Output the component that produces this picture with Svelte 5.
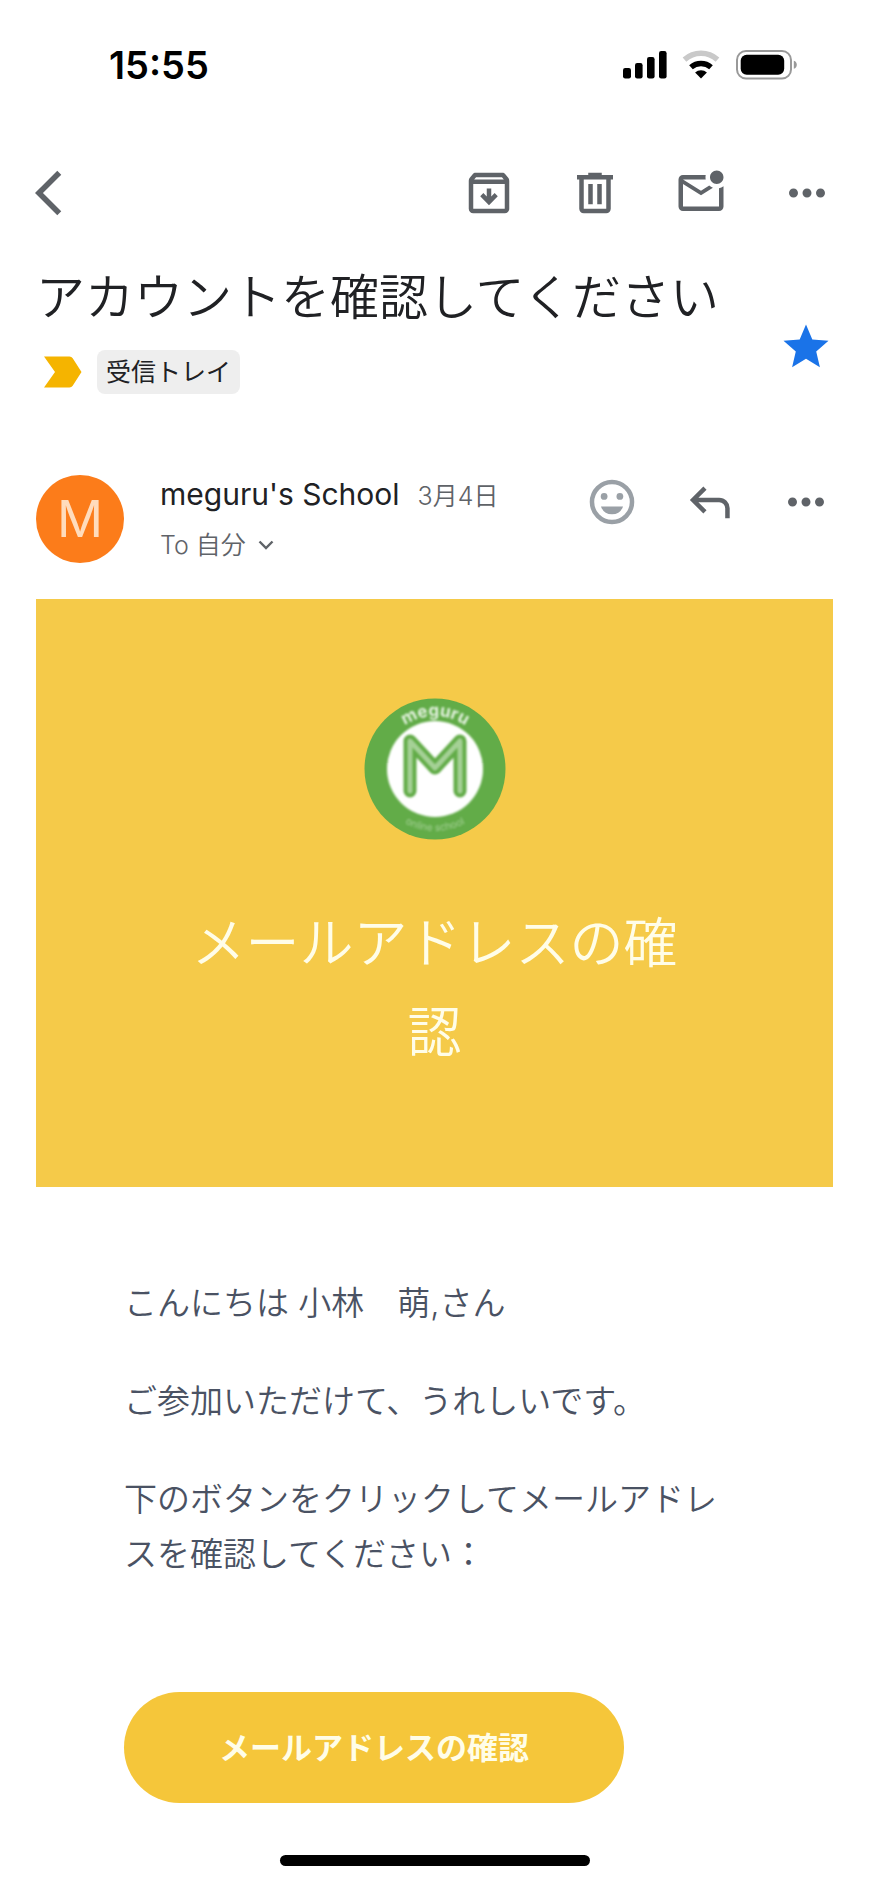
<script lang="ts">
	const archive =
		'M20.54 5.23l-1.39-1.68C18.88 3.21 18.47 3 18 3H6c-.47 0-.88.21-1.16.55L3.46 5.23C3.17 5.57 3 6.02 3 6.5V19c0 1.1.9 2 2 2h14c1.1 0 2-.9 2-2V6.5c0-.48-.17-.93-.46-1.27zM6.24 5h11.52l.83 1H5.42l.82-1zM5 19V8h14v11H5zM13 10h-2v3.5l-1.5-1.5-1.4 1.4 3.9 4 3.9-4-1.4-1.4-1.5 1.5z';
	const trash =
		'M15 4V3H9v1H4v2h1v13c0 1.1.9 2 2 2h10c1.1 0 2-.9 2-2V6h1V4h-5zm2 15H7V6h10v13zM9 8h2v9H9zM13 8h2v9h-2z';
	const unread =
		'M22 8.98V18c0 1.1-.9 2-2 2H4c-1.1 0-2-.9-2-2V6c0-1.1.9-2 2-2h10.1c-.06.32-.1.66-.1 1s.04.68.1 1H4l8 5 3.67-2.29c.47.43 1.02.76 1.63.98L12 13 4 8v10h16V9.9c.74-.15 1.42-.48 2-.92zM16 5c0 1.66 1.34 3 3 3s3-1.34 3-3-1.34-3-3-3-3 1.34-3 3z';
	const more =
		'M6 10c-1.1 0-2 .9-2 2s.9 2 2 2 2-.9 2-2-.9-2-2-2zm12 0c-1.1 0-2 .9-2 2s.9 2 2 2 2-.9 2-2-.9-2-2-2zm-6 0c-1.1 0-2 .9-2 2s.9 2 2 2 2-.9 2-2-.9-2-2-2z';

	const tools = [
		{ label: 'アーカイブ', path: archive },
		{ label: '削除', path: trash },
		{ label: '未読にする', path: unread },
		{ label: 'その他', path: more }
	];

	let starred = $state(true);
</script>

<div class="screen">
	<div class="status">
		<span class="time">15:55</span>
		<svg width="175" height="30" viewBox="0 0 175 30" aria-hidden="true">
			<rect x="0" y="18" width="8" height="10.5" rx="2.2" />
			<rect x="12" y="13" width="7.6" height="15.5" rx="2.2" />
			<rect x="24" y="7" width="7.6" height="21.5" rx="2.2" />
			<rect x="36" y="1" width="7.6" height="27.5" rx="2.2" />
			<g fill="none" stroke-width="5.5">
				<path d="M61.5 9.6a24.7 24.7 0 0 1 33 0" stroke="#c9c9c9" />
				<path d="M68 17.2a15.2 15.2 0 0 1 20 0" stroke="#000" />
			</g>
			<path d="M78 28.5l-5.9-6a8.6 8.6 0 0 1 11.8 0z" />
			<rect x="114" y="1" width="54" height="27.5" rx="9" fill="none" stroke="#999" stroke-width="2" />
			<rect x="117.7" y="4.7" width="43.5" height="20" rx="6" />
			<path d="M170.8 10.8c4 1 4 7 0 8z" fill="#999" />
		</svg>
	</div>

	<nav class="toolbar">
		<button class="icon back" aria-label="戻る">
			<svg viewBox="0 0 24 24"><path d="M11.67 3.87L9.9 2.1 0 12l9.9 9.9 1.77-1.77L3.54 12z" /></svg>
		</button>
		{#each tools as tool}
			<button class="icon" aria-label={tool.label}>
				<svg viewBox="0 0 24 24"><path fill-rule="evenodd" d={tool.path} /></svg>
			</button>
		{/each}
	</nav>

	<main>
		<header class="subject">
			<div>
				<h1>アカウントを確認してください</h1>
				<div class="labels">
					<svg width="38" height="32" viewBox="0 0 38 32" aria-hidden="true">
						<path d="M0 .5h25.5q2 0 3.2 1.8L37.5 16l-8.8 13.7q-1.2 1.8-3.2 1.8H0L11 16z" fill="#f5b400" />
					</svg>
					<span class="chip">受信トレイ</span>
				</div>
			</div>
			<button
				class="icon star"
				class:starred
				aria-label="スター"
				aria-pressed={starred}
				onclick={() => (starred = !starred)}
			>
				<svg viewBox="0 0 24 24">
					<path d="M12 17.27L18.18 21l-1.64-7.03L22 9.24l-7.19-.61L12 2 9.19 8.63 2 9.24l5.46 4.73L5.82 21z" />
				</svg>
			</button>
		</header>

		<section class="sender">
			<div class="avatar">M</div>
			<div class="who">
				<div class="line">
					<span class="name">meguru's School</span>
					<span class="small">3月4日</span>
				</div>
				<button class="to small">
					To 自分
					<svg width="16" height="10" viewBox="0 0 16 10" aria-hidden="true">
						<path d="M1.5 1.5L8 8l6.5-6.5" fill="none" stroke="currentColor" stroke-width="2.4" />
					</svg>
				</button>
			</div>
			<div class="actions">
				<button class="icon emoji" aria-label="リアクション">
					<svg viewBox="0 0 24 24">
						<circle cx="12" cy="12" r="8.9" fill="none" stroke="currentColor" stroke-width="2" />
						<circle cx="8.5" cy="9.5" r="1.5" />
						<circle cx="15.5" cy="9.5" r="1.5" />
						<path d="M7.1 14h9.8a5.2 5.2 0 0 1-9.8 0z" />
					</svg>
				</button>
				<button class="icon" aria-label="返信">
					<svg viewBox="0 0 24 24">
						<path
							d="M10.2 5.8l-5.3 5.3 5.3 5.3M4.9 11.1h11.6a3.7 3.7 0 0 1 3.7 3.7v4.4"
							fill="none"
							stroke="currentColor"
							stroke-width="2"
						/>
					</svg>
				</button>
				<button class="icon" aria-label="その他">
					<svg viewBox="0 0 24 24"><path d={more} /></svg>
				</button>
			</div>
		</section>

		<article>
			<div class="banner">
				<svg class="logo" viewBox="-71 -71 142 142" role="img" aria-label="meguru">
					<defs>
						<path id="arc-top" d="M-53 0a53 53 0 0 1 106 0" />
						<path id="arc-bottom" d="M-62 0a62 62 0 0 0 124 0" />
					</defs>
					<circle r="70.5" fill="#62ac48" />
					<g class="soft">
						<circle r="48" fill="#fff" />
						<g fill="none" stroke-linecap="round" stroke-linejoin="round">
							<path d="M-25 22V-28L0-1 25-28V22" stroke="#62ac48" stroke-width="13" />
							<path d="M-25 22V-28L0-1 25-28V22" stroke="#a5d196" stroke-width="5" />
						</g>
						<text class="logo-name"><textPath href="#arc-top" startOffset="50%">meguru</textPath></text>
						<text class="logo-sub"><textPath href="#arc-bottom" startOffset="50%">online school</textPath></text>
					</g>
				</svg>
				<h2>メールアドレスの確認</h2>
			</div>

			<div class="body">
				<p>こんにちは 小林　萌,さん</p>
				<p>ご参加いただけて、うれしいです。</p>
				<p>下のボタンをクリックしてメールアドレスを確認してください：</p>
				<a class="confirm" href="#confirm">メールアドレスの確認</a>
			</div>
		</article>
	</main>

	<div class="home"></div>
</div>

<style>
	:global(body) {
		background: #fff;
	}

	.screen {
		font-family: Inter, 'Noto Sans CJK JP', sans-serif;
		color: #202124;
	}

	.status {
		display: flex;
		align-items: center;
		justify-content: space-between;
		height: 130px;
		padding: 0 71px 0 109px;
	}

	.time {
		font-size: 38px;
		font-weight: 600;
		color: #000;
	}

	button {
		padding: 0;
		border: 0;
		background: none;
		font: inherit;
		color: #5f6368;
		cursor: pointer;
	}

	.icon,
	.icon svg {
		display: block;
		flex: none;
		width: 54px;
		height: 54px;
		fill: currentColor;
	}

	.toolbar {
		display: flex;
		gap: 52px;
		margin-top: 36px;
		padding: 0 35px;
	}

	.back {
		margin-right: auto;
	}

	main {
		padding: 0 36px;
	}

	.subject {
		display: flex;
		align-items: flex-end;
		justify-content: space-between;
		margin-top: 48px;
	}

	h1 {
		margin: 0;
		font-size: 49px;
		font-weight: 350;
		line-height: 60px;
	}

	.labels {
		display: flex;
		align-items: center;
		gap: 15px;
		margin-top: 22px;
		padding-left: 8px;
	}

	.chip {
		padding: 0 9px;
		border-radius: 8px;
		background: #eee;
		font-size: 25px;
		font-weight: 400;
		line-height: 44px;
	}

	.star {
		margin-bottom: 20px;
	}

	.starred {
		color: #1a73e8;
	}

	.sender {
		display: flex;
		margin-top: 81px;
	}

	.avatar {
		flex: none;
		width: 88px;
		height: 88px;
		border-radius: 50%;
		background: #fc7c1a;
		color: #ffdcbc;
		font-size: 51px;
		line-height: 88px;
		text-align: center;
	}

	.who {
		flex: 1;
		margin-left: 36px;
	}

	.line {
		display: flex;
		align-items: baseline;
		gap: 18px;
		line-height: 38px;
	}

	.name {
		font-size: 30px;
	}

	.small {
		font-size: 25px;
		font-weight: 350;
		color: #5f6368;
	}

	.to {
		display: flex;
		align-items: center;
		gap: 12px;
		margin-top: 10px;
		line-height: 40px;
	}

	.actions {
		display: flex;
		gap: 43px;
	}

	.emoji {
		color: #9aa0a6;
	}

	.banner {
		margin-top: 34px;
		padding: 99px 140px 110px;
		background: #f5ca49;
		text-align: center;
	}

	.logo {
		display: block;
		width: 142px;
		height: 142px;
		margin: 0 auto;
		overflow: visible;
	}

	/* the school's mark is a tiny upscaled bitmap */
	.soft {
		filter: blur(1px);
	}

	.logo-name {
		fill: #e4f2df;
		font-size: 17px;
		font-weight: 700;
		text-anchor: middle;
	}

	.logo-sub {
		fill: #a5d196;
		font-size: 10px;
		text-anchor: middle;
	}

	h2 {
		margin: 59px 0 0;
		color: #fffde8;
		font-size: 54px;
		font-weight: 350;
		line-height: 89px;
	}

	.body {
		padding: 89px 88px 0;
		color: #4a5263;
		font-size: 33px;
		font-weight: 350;
		line-height: 55px;
	}

	p {
		margin: 0 0 43px;
	}

	.confirm {
		display: inline-block;
		margin-top: 67px;
		padding: 0 95px;
		border-radius: 56px;
		background: #f5c63a;
		color: #fffde8;
		font-size: 31px;
		font-weight: 700;
		line-height: 111px;
		text-decoration: none;
	}

	.home {
		width: 310px;
		height: 11px;
		margin: 52px auto 17px;
		border-radius: 6px;
		background: #000;
	}
</style>
